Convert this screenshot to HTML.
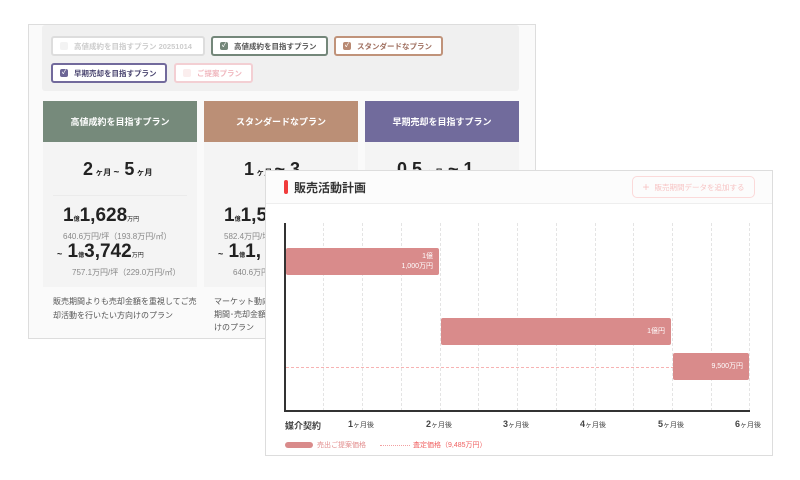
<!DOCTYPE html><html><head><meta charset="utf-8"><style>
*{box-sizing:border-box;margin:0;padding:0}
body{width:800px;height:480px;background:#fff;position:relative;overflow:hidden;font-family:"Liberation Sans","Noto Sans CJK JP",sans-serif;color:#333}
.abs{position:absolute}
#back{left:28px;top:24px;width:508px;height:315px;background:#fafafa;border:1px solid #ddd;overflow:hidden}
.chip{position:absolute;height:20px;border:2px solid;border-radius:3px;font-size:7.5px;font-weight:bold;display:flex;align-items:center;padding-left:7px;background:#fff;white-space:nowrap;overflow:hidden}
.cb{width:8px;height:8px;border-radius:2px;margin-right:6px;color:#fff;font-size:6px;line-height:8px;text-align:center;flex:none}
.card{position:absolute;top:76px;width:154px;height:240px;background:#f4f4f4}
.ch{height:41px;color:#fff;font-size:9px;font-weight:bold;display:flex;align-items:center;justify-content:center}
.big{font-weight:bold;color:#222}
.sm{font-size:8px;color:#888}
#front{left:265px;top:170px;width:508px;height:286px;background:#fff;border:1px solid #ddd}
.grid{position:absolute;top:52px;height:188px;border-left:1px dashed #e4e4e4}
.bar{position:absolute;background:#d98b8b;border-radius:2px;color:#fff;font-size:7px;text-align:right;padding-right:6px;display:flex;flex-direction:column;justify-content:center;align-items:flex-end;line-height:10px}
.ml{position:absolute;top:248px;font-size:9px;font-weight:bold;color:#444}
.ml small{font-size:7px;font-weight:normal}
</style></head><body>
<div id="back" class="abs">
 <div class="abs" style="left:13px;top:0;width:477px;height:66px;background:#f0f0f0;border-radius:3px"></div>
 <div class="chip" style="left:22px;top:11px;width:154px;border-color:#ddd;color:#ccc"><span class="cb" style="background:#f3f3f3"></span>高値成約を目指すプラン 20251014</div>
 <div class="chip" style="left:182px;top:11px;width:117px;border-color:#74877a;color:#555"><span class="cb" style="background:#74877a">✓</span>高値成約を目指すプラン</div>
 <div class="chip" style="left:305px;top:11px;width:109px;border-color:#c0937a;color:#a07060"><span class="cb" style="background:#b98a73">✓</span>スタンダードなプラン</div>
 <div class="chip" style="left:22px;top:38px;width:116px;border-color:#726a9c;color:#4a4570"><span class="cb" style="background:#6c6696">✓</span>早期売却を目指すプラン</div>
 <div class="chip" style="left:145px;top:38px;width:79px;border-color:#f3cfd3;color:#f0b8bf"><span class="cb" style="background:#fbeeee"></span>ご提案プラン</div>
 <div class="card" style="left:14px"><div class="ch" style="background:#768a7b">高値成約を目指すプラン</div>
  <div class="abs big" style="left:40px;top:58px;font-size:18px">2<small style="font-size:8px"> ヶ月 </small><small style="font-size:10px">~</small> 5<small style="font-size:8px"> ヶ月</small></div>
  <div class="abs" style="left:10px;top:94px;width:134px;border-top:1px solid #ebebeb"></div>
  <div class="abs big" style="left:20px;top:104px;font-size:19px">1<small style="font-size:6px">億</small>1,628<small style="font-size:6px;font-weight:normal">万円</small></div>
  <div class="abs sm" style="left:20px;top:130px">640.6万円/坪（193.8万円/㎡）</div>
  <div class="abs big" style="left:14px;top:140px;font-size:19px"><small style="font-size:9px">~</small> 1<small style="font-size:6px">億</small>3,742<small style="font-size:6px;font-weight:normal">万円</small></div>
  <div class="abs sm" style="left:29px;top:166px">757.1万円/坪（229.0万円/㎡）</div>
  <div class="abs" style="left:0;top:186px;width:154px;height:54px;background:#fafafa"></div>
  <div class="abs" style="left:10px;top:194px;font-size:8px;color:#555;line-height:14px">販売期間よりも売却金額を重視してご売<br>却活動を行いたい方向けのプラン</div></div>
 <div class="card" style="left:175px"><div class="ch" style="background:#bb8f76">スタンダードなプラン</div>
  <div class="abs big" style="left:40px;top:58px;font-size:18px">1<small style="font-size:8px"> ヶ月 </small>~ 3</div>
  <div class="abs big" style="left:20px;top:104px;font-size:19px">1<small style="font-size:6px">億</small>1,57</div>
  <div class="abs sm" style="left:20px;top:130px">582.4万円/坪</div>
  <div class="abs big" style="left:14px;top:140px;font-size:19px"><small style="font-size:9px">~</small> 1<small style="font-size:6px">億</small>1,</div>
  <div class="abs sm" style="left:29px;top:166px">640.6万円</div>
  <div class="abs" style="left:0;top:186px;width:154px;height:54px;background:#fafafa"></div>
  <div class="abs" style="left:10px;top:194px;font-size:8px;color:#555;line-height:13px">マーケット動向<br>期間･売却金額を<br>けのプラン</div></div>
 <div class="card" style="left:336px"><div class="ch" style="background:#716b9c">早期売却を目指すプラン</div>
  <div class="abs big" style="left:32px;top:58px;font-size:18px">0.5 <small style="font-size:8px">ヶ月</small> ~ 1</div></div>
</div>
<div id="front" class="abs">
 <div class="abs" style="left:0;top:0;width:506px;height:33px;background:#fcfcfc;border-bottom:1px solid #eee"></div>
 <div class="abs" style="left:18px;top:9px;width:4px;height:14px;background:#f03c3c;border-radius:2px"></div>
 <div class="abs" style="left:28px;top:8px;font-size:12px;font-weight:bold;color:#333">販売活動計画</div>
 <div class="abs" style="left:366px;top:5px;width:123px;height:22px;border:1px solid #fbdada;border-radius:5px;color:#f7c4c4;font-size:7.5px;display:flex;align-items:center;justify-content:center"><span style="font-size:12px;margin-right:5px">+</span>販売期間データを追加する</div>
 <div class="grid" style="left:57px"></div><div class="grid" style="left:96px"></div><div class="grid" style="left:135px"></div><div class="grid" style="left:174px"></div><div class="grid" style="left:212px"></div><div class="grid" style="left:251px"></div><div class="grid" style="left:290px"></div><div class="grid" style="left:329px"></div><div class="grid" style="left:367px"></div><div class="grid" style="left:406px"></div><div class="grid" style="left:445px"></div><div class="grid" style="left:483px"></div>
 <div class="abs" style="left:18px;top:52px;width:2px;height:189px;background:#333"></div>
 <div class="abs" style="left:18px;top:239px;width:466px;height:2px;background:#333"></div>
 <div class="abs" style="left:20px;top:196px;width:388px;border-top:1px dashed #f7b3b3"></div>
 <div class="bar" style="left:20px;top:77px;width:153px;height:27px"><div>1億</div><div>1,000万円</div></div>
 <div class="bar" style="left:175px;top:147px;width:230px;height:27px">1億円</div>
 <div class="bar" style="left:407px;top:182px;width:76px;height:27px">9,500万円</div>
 <div class="ml" style="left:19px">媒介契約</div>
 <div class="ml" style="left:82px">1<small>ヶ月後</small></div>
 <div class="ml" style="left:160px">2<small>ヶ月後</small></div>
 <div class="ml" style="left:237px">3<small>ヶ月後</small></div>
 <div class="ml" style="left:314px">4<small>ヶ月後</small></div>
 <div class="ml" style="left:392px">5<small>ヶ月後</small></div>
 <div class="ml" style="left:469px">6<small>ヶ月後</small></div>
 <div class="abs" style="left:19px;top:271px;width:28px;height:6px;background:#d98b8b;border-radius:3px"></div>
 <div class="abs" style="left:51px;top:269px;font-size:7px;color:#e28d8d">売出ご提案価格</div>
 <div class="abs" style="left:114px;top:274px;width:30px;border-top:1px dotted #f2a0a0"></div>
 <div class="abs" style="left:147px;top:269px;font-size:7px;color:#f06060">査定価格（9,485万円）</div>
</div>
</body></html>
